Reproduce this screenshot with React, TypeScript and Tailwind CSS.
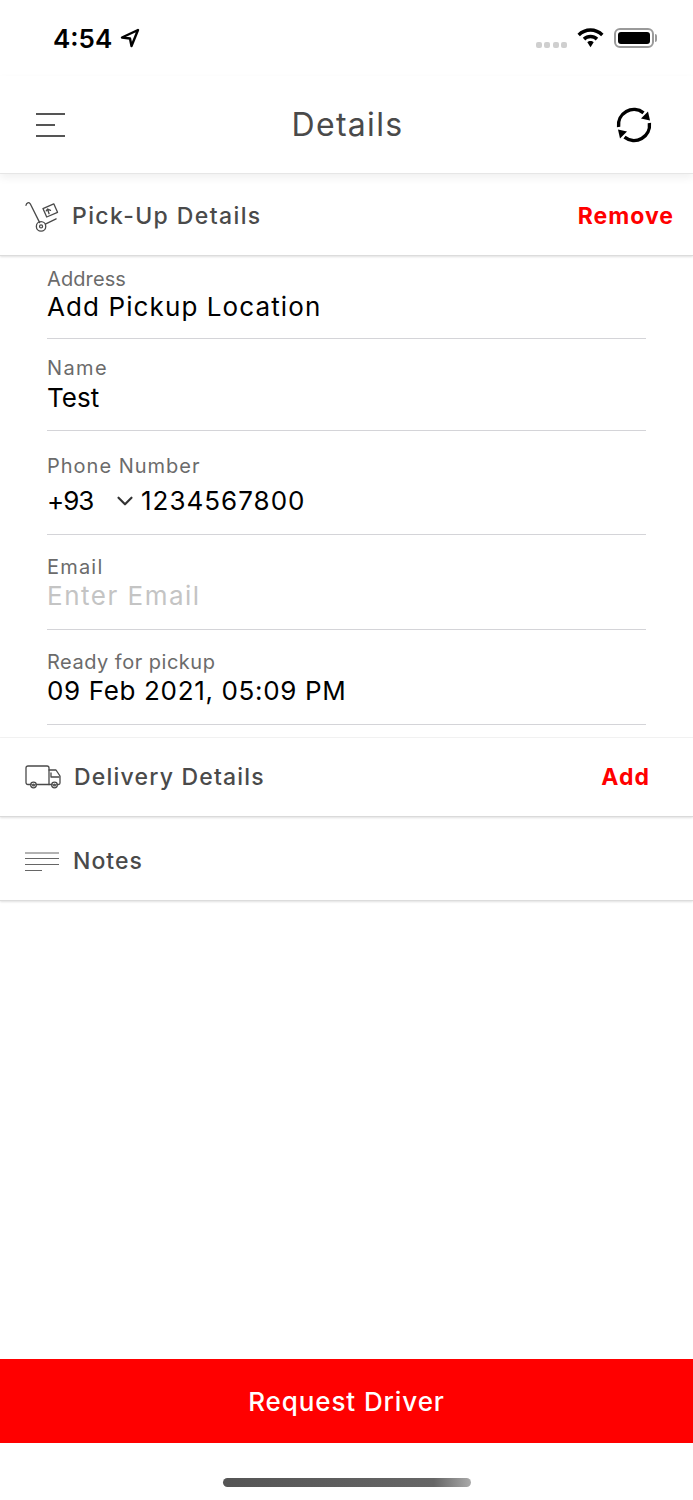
import { ChevronDown } from "lucide-react"

function CartIcon() {
  return (
    <svg width="34" height="32" viewBox="0 0 36 34" fill="none" stroke="#4a4a4a" strokeWidth="1.400" strokeLinecap="round" strokeLinejoin="round">
      <path d="M1 4.500 C1.500 1.500 4 1 5.500 3 L15.500 23" />
      <circle cx="17" cy="27" r="5" />
      <circle cx="17" cy="27" r="1.600" />
      <path d="M21.500 24.500 L33 19" />
      <path d="M19 8 L30.500 3 L34.500 12 L23 17 Z" />
      <path d="M25.500 13.500 L24 9 M22.500 10.500 L24 8.500 L27 10" />
    </svg>
  )
}

function TruckIcon() {
  return (
    <svg width="36" height="24" viewBox="0 0 36 24" fill="none" stroke="#4a4a4a" strokeWidth="1.300" strokeLinecap="round" strokeLinejoin="round">
      <path d="M6 19.500 H3 C1.800 19.500 1 18.700 1 17.500 V3 C1 1.800 1.800 1 3 1 H22 C23 1 24 1.800 24 3 V19.500 H11" />
      <path d="M24 5 H31 L35 11 V18 C35 19 34.500 19.500 33.500 19.500 H32" />
      <path d="M24 19.500 H27" />
      <path d="M26 8 V12 H34" />
      <circle cx="8.500" cy="20" r="2.800" />
      <circle cx="29.500" cy="20" r="2.800" />
      <circle cx="8.500" cy="20" r="0.900" />
      <circle cx="29.500" cy="20" r="0.900" />
    </svg>
  )
}

function NotesIcon() {
  return (
    <svg width="34" height="20" viewBox="0 0 34 20" fill="none" stroke="#666" strokeWidth="1">
      <path d="M0 1 H34 M0 6.500 H34 M0 12.500 H34 M0 18.500 H17" />
    </svg>
  )
}

function SyncIcon() {
  return (
    <svg width="38" height="38" viewBox="0 0 38 38" fill="none">
      <path d="M3.600 21 A15.500 15.500 0 0 1 28.500 6.800" stroke="#000" strokeWidth="3.400" />
      <path d="M34.400 17 A15.500 15.500 0 0 1 9.500 31.200" stroke="#000" strokeWidth="3.400" />
      <path d="M33 5.500 L35 14.500 L26 12.500 Z" fill="#000" />
      <path d="M5 32.500 L3 23.500 L12 25.500 Z" fill="#000" />
    </svg>
  )
}

function Field({ label, value, muted, pt, pb, gap, labelTrack, valueTrack }: { label: string; value: string; muted?: boolean; pt: string; pb: string; gap: string; labelTrack: string; valueTrack: string }) {
  return (
    <div className={`border-b border-[#d4d4d8] ${pt} ${pb}`}>
      <div className={`text-[20px] leading-[24px] ${labelTrack} text-[#6b6b6b]`}>{label}</div>
      <div className={`${gap} text-[26px] leading-[32px] ${valueTrack} ${muted ? "text-[#c4c4c4]" : "text-black"}`}>{value}</div>
    </div>
  )
}

function SectionRow({ icon, title, action, h, gap, pt, track }: { icon: React.ReactNode; title: string; action?: React.ReactNode; h: string; gap: string; pt: string; track: string }) {
  return (
    <div className={`flex items-center justify-between pl-[25px] ${h} ${pt} border-b border-[#dcdcdc] shadow-[0_1px_2px_rgba(0,0,0,0.12)]`}>
      <div className={`flex items-center ${gap}`}>
        {icon}
        <span className={`text-[23px] font-medium ${track} text-[#4a4a4a]`}>{title}</span>
      </div>
      {action}
    </div>
  )
}

export default function App() {
  return (
    <div className="flex h-[1500px] w-[693px] flex-col bg-white font-['Inter',sans-serif]">
      {/* status bar */}
      <div className="flex h-[76px] items-center justify-between pl-[53px] pr-[36px]">
        <div className="flex items-center gap-[8px]">
          <span className="text-[26px] font-semibold text-black">4:54</span>
          <svg width="20" height="20" viewBox="0 0 20 20" fill="none" stroke="#000" strokeWidth="2.400" strokeLinejoin="round">
            <path d="M18 2 L2 9.500 L10 10.500 L11.500 18 Z" />
          </svg>
        </div>
        <div className="flex items-center gap-[10px]">
          <div className="mt-[14px] flex gap-[2.500px]">
            <span className="h-[6px] w-[6px] rounded-[2px] bg-[#cfcfcf]" />
            <span className="h-[6px] w-[6px] rounded-[2px] bg-[#cfcfcf]" />
            <span className="h-[6px] w-[6px] rounded-[2px] bg-[#cfcfcf]" />
            <span className="h-[6px] w-[6px] rounded-[2px] bg-[#cfcfcf]" />
          </div>
          <svg width="27" height="20" viewBox="0 0 28 20" fill="#000">
            <path d="M14 0 C19 0 24 2 27.500 5.500 L25 8.200 C22 5.300 18 3.600 14 3.600 C10 3.600 6 5.300 3 8.200 L0.500 5.500 C4 2 9 0 14 0 Z" />
            <path d="M14 6.500 C17 6.500 19.800 7.700 22 9.800 L19.400 12.500 C18 11 16 10.200 14 10.200 C12 10.200 10 11 8.600 12.500 L6 9.800 C8.200 7.700 11 6.500 14 6.500 Z" />
            <path d="M14 13 C15.300 13 16.500 13.500 17.300 14.400 L14 19.500 L10.700 14.400 C11.500 13.500 12.700 13 14 13 Z" />
          </svg>
          <div className="flex items-center gap-[1px]">
            <div className="flex h-[20px] w-[40px] items-center rounded-[6px] border-2 border-[#9a9a9a] p-[2px]">
              <div className="h-full w-full rounded-[3px] bg-black" />
            </div>
            <div className="h-[8px] w-[2px] rounded-r bg-[#9a9a9a]" />
          </div>
        </div>
      </div>

      {/* nav bar */}
      <div className="grid h-[98px] grid-cols-3 items-center border-b border-[#e8e8e8] pl-[36px] pr-[34px] shadow-[0_4px_8px_rgba(0,0,0,0.06)]">
        <svg width="29" height="26" viewBox="0 0 29 26" fill="none" stroke="#555" strokeWidth="2">
          <path d="M0 2 H29 M0 13 H19 M0 24 H29" />
        </svg>
        <span className="justify-self-center text-[32px] tracking-[1.300px] whitespace-nowrap text-[#4a4a4a]">Details</span>
        <div className="mr-[6px] justify-self-end">
          <SyncIcon />
        </div>
      </div>

      <SectionRow
        icon={<CartIcon />}
        title="Pick-Up Details"
        h="h-[82px]"
        pt="pt-[4px]"
        gap="gap-[13px]"
        track="tracking-[1.400px]"
        action={<span className="pr-[19px] text-[23px] font-bold tracking-[1px] text-[#ff0000]">Remove</span>}
      />

      <div className="pl-[47px] pr-[47px]">
        <Field label="Address" value="Add Pickup Location" pt="pt-[11px]" pb="pb-[15px]" gap="mt-0" labelTrack="tracking-[0.100px]" valueTrack="tracking-[1.100px]" />
        <Field label="Name" value="Test" pt="pt-[17px]" pb="pb-[16px]" gap="mt-[2px]" labelTrack="tracking-[1.400px]" valueTrack="tracking-0" />
        <div className="border-b border-[#d4d4d8] pt-[23px] pb-[17px]">
          <div className="text-[20px] leading-[24px] tracking-[1px] text-[#6b6b6b]">Phone Number</div>
          <div className="mt-[7px] flex items-center text-[26px] leading-[32px] tracking-[1px] text-black">
            <span className="w-[65px] tracking-[-1px]">+93</span>
            <ChevronDown size={26} strokeWidth={2} className="mr-[3px] text-[#333]" />
            <span>1234567800</span>
          </div>
        </div>
        <Field label="Email" value="Enter Email" muted pt="pt-[20px]" pb="pb-[17px]" gap="mt-[1px]" labelTrack="tracking-[1.200px]" valueTrack="tracking-[1.500px]" />
        <Field label="Ready for pickup" value="09 Feb 2021, 05:09 PM" pt="pt-[20px]" pb="pb-[17px]" gap="mt-[1px]" labelTrack="tracking-[0.500px]" valueTrack="tracking-[0.650px]" />
      </div>

      <div className="mt-[12px] border-t border-[#f3f3f3]">
        <SectionRow
          icon={<TruckIcon />}
          title="Delivery Details"
          h="h-[79px]"
          pt="pt-0"
          gap="gap-[13px]"
          track="tracking-[1.200px]"
          action={<span className="pr-[43px] text-[23px] font-bold tracking-[1px] text-[#ff0000]">Add</span>}
        />
      </div>
      <SectionRow icon={<NotesIcon />} title="Notes" h="h-[84px]" pt="pt-[6px]" gap="gap-[14px]" track="tracking-[1px]" />

      <div className="flex-1" />

      <button className="h-[84px] w-full bg-[#ff0000] text-[26px] font-medium tracking-[0.9px] text-white">Request Driver</button>
      <div className="flex h-[57px] items-start justify-center pt-[35px]">
        <div className="h-[9px] w-[248px] rounded-full bg-gradient-to-r from-[#555] via-[#666] via-85% to-[#aaa]" />
      </div>
    </div>
  )
}
